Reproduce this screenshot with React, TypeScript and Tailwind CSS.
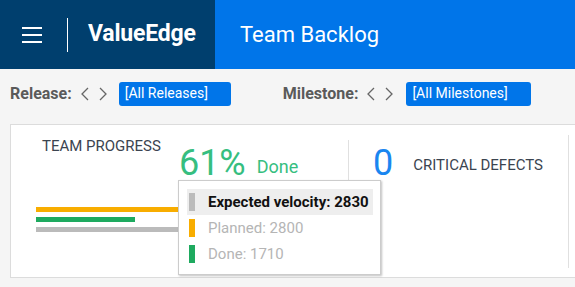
import React from "react";

const font = { fontFamily: "Roboto, 'Liberation Sans', sans-serif" };

function Chevron({ dir }: { dir: "l" | "r" }) {
  return (
    <svg width="8" height="14" viewBox="0 0 8 14" className="text-[#666]">
      {dir === "l" ? (
        <polyline points="7,1 1,7 7,13" fill="none" stroke="currentColor" strokeWidth="1.3" />
      ) : (
        <polyline points="1,1 7,7 1,13" fill="none" stroke="currentColor" strokeWidth="1.3" />
      )}
    </svg>
  );
}

export default function App() {
  return (
    <div className="w-[575px] h-[287px] overflow-hidden bg-[#f5f5f5] relative" style={font}>
      <div className="flex h-[69px]">
        <div className="w-[215px] bg-[#003f6e] flex items-center">
          <div className="ml-[22px] flex flex-col gap-[5px] w-[20px]">
            <div className="h-[2px] bg-white" />
            <div className="h-[2px] bg-white" />
            <div className="h-[2px] bg-white" />
          </div>
          <div className="ml-[25px] w-px h-[34px] bg-white" />
          <div className="ml-[20px] text-white font-bold text-[23px] tracking-[-0.2px]">ValueEdge</div>
        </div>
        <div className="flex-1 bg-[#0075e9] flex items-center pl-[25px]">
          <div className="text-white text-[22px]">Team Backlog</div>
        </div>
      </div>

      <div className="h-[49px] flex items-center pl-[10px]">
        <span className="text-[16px] font-bold text-[#5a5a5a]">Release:</span>
        <div className="ml-[9px] flex gap-[10px] items-center">
          <Chevron dir="l" />
          <Chevron dir="r" />
        </div>
        <div className="ml-[12px] w-[112px] h-[24px] rounded-[3px] bg-[#0075e9] text-white text-[14px] flex items-center pl-[6px]">
          [All Releases]
        </div>
        <span className="ml-[52px] text-[16px] font-bold text-[#5a5a5a]">Milestone:</span>
        <div className="ml-[9px] flex gap-[10px] items-center">
          <Chevron dir="l" />
          <Chevron dir="r" />
        </div>
        <div className="ml-[13px] w-[125px] h-[24px] rounded-[3px] bg-[#0075e9] text-white text-[14px] flex items-center pl-[6px]">
          [All Milestones]
        </div>
      </div>

      <div className="mt-[6px] ml-[10px] w-[600px] h-[154px] bg-white border border-[#dcdcdc] flex">
        <div className="w-[337px] flex flex-col">
          <div className="flex items-start">
            <div className="ml-[31px] mt-[12px] text-[15px] leading-[18px] text-[#3b4450]">TEAM PROGRESS</div>
            <span className="ml-[18px] mt-[18px] text-[36px] leading-[40px] text-[#36be80]">61%</span>
            <span className="ml-[11px] mt-[31px] text-[18px] leading-[22px] text-[#36be80]">Done</span>
          </div>
          <div className="ml-[25px] mt-[24px] flex flex-col gap-[5px]">
            <div className="h-[5px] w-[250px] bg-[#f8ad00]" />
            <div className="h-[5px] w-[99px] bg-[#1eaa5f]" />
            <div className="h-[5px] w-[240px] bg-[#bbbbbb]" />
          </div>
        </div>
        <div className="w-px h-[45px] mt-[15px] bg-[#e0e0e0]" />
        <div className="w-[219px] flex items-start">
          <span className="ml-[24px] mt-[18px] text-[36px] leading-[40px] text-[#1a86f0]">0</span>
          <span className="ml-[20px] mt-[31px] text-[15px] leading-[18px] text-[#3b4450]">CRITICAL DEFECTS</span>
        </div>
        <div className="w-px h-[133px] mt-[10px] bg-[#e0e0e0]" />
      </div>

      <div className="absolute left-[178px] top-[180px] w-[203px] h-[95px] bg-white border border-[#cccccc] shadow-[1px_1px_2px_rgba(0,0,0,0.25)] pt-[8px] pl-[8px]">
        <div className="flex items-center h-[26px] w-[186px] bg-[#eeeeee]">
          <div className="ml-[2px] w-[6px] h-[18px] bg-[#bbbbbb]" />
          <span className="ml-[13px] text-[15px] font-bold text-[#111] whitespace-nowrap">Expected velocity: 2830</span>
        </div>
        <div className="flex items-center h-[26px]">
          <div className="ml-[2px] w-[6px] h-[18px] bg-[#f8ad00]" />
          <span className="ml-[13px] text-[15px] text-[#b5b5b5]">Planned: 2800</span>
        </div>
        <div className="flex items-center h-[26px]">
          <div className="ml-[2px] w-[6px] h-[18px] bg-[#1eaa5f]" />
          <span className="ml-[13px] text-[15px] text-[#b5b5b5]">Done: 1710</span>
        </div>
      </div>
    </div>
  );
}
